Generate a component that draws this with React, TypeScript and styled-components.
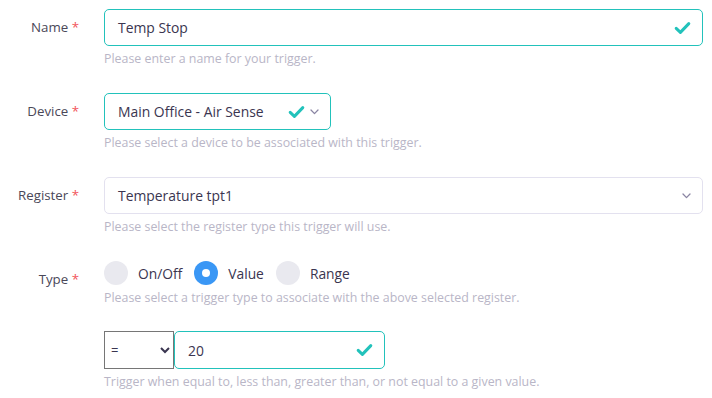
import styled, { createGlobalStyle } from 'styled-components';

const GlobalStyle = createGlobalStyle`
	html, body {
		margin: 0;
		padding: 0;
		background: #ffffff;
	}
	body {
		font-family: 'Open Sans', 'Liberation Sans', sans-serif;
	}
`;

const teal = '#22c2bb';

const CheckIcon = ({ size = 17 }: { size?: number }) => (
	<svg width={size} height={Math.round(size * 0.8)} viewBox="0 0 17 14" fill="none">
		<path d="M2.2 7.4 L6.4 11.4 L14.8 2.6" stroke={teal} strokeWidth="3" strokeLinecap="round" strokeLinejoin="round" />
	</svg>
);

const Chevron = () => (
	<svg width="9" height="6" viewBox="0 0 9 6" fill="none">
		<path d="M1 1 L4.5 4.6 L8 1" stroke="#8a85a3" strokeWidth="1.3" strokeLinecap="round" strokeLinejoin="round" />
	</svg>
);

type RadioProps = { label: string; checked?: boolean };

const Radio = ({ label, checked }: RadioProps) => (
	<RadioItem>
		<RadioDot checked={checked} />
		<RadioLabel>{label}</RadioLabel>
	</RadioItem>
);

export default function App() {
	return (
		<>
			<GlobalStyle />
			<Form>
				<Label>
					Name <Req>*</Req>
				</Label>
				<Field>
					<Control valid>
						<Value>Temp Stop</Value>
						<CheckIcon />
					</Control>
					<Help>Please enter a name for your trigger.</Help>
				</Field>

				<Label>
					Device <Req>*</Req>
				</Label>
				<Field>
					<Control valid width="227px">
						<Value>Main Office - Air Sense</Value>
						<Icons>
							<CheckIcon />
							<Chevron />
						</Icons>
					</Control>
					<Help>Please select a device to be associated with this trigger.</Help>
				</Field>

				<Label>
					Register <Req>*</Req>
				</Label>
				<Field>
					<Control>
						<Value>Temperature tpt1</Value>
						<Icons>
							<Chevron />
						</Icons>
					</Control>
					<Help>Please select the register type this trigger will use.</Help>
				</Field>

				<Label>
					Type <Req>*</Req>
				</Label>
				<Field>
					<Radios>
						<Radio label="On/Off" />
						<Radio label="Value" checked />
						<Radio label="Range" />
					</Radios>
					<Help>Please select a trigger type to associate with the above selected register.</Help>
				</Field>

				<span />
				<Field>
					<Compare>
						<Operator defaultValue="=">
							<option value="=">=</option>
							<option value="<">&lt;</option>
							<option value=">">&gt;</option>
							<option value="!=">!=</option>
						</Operator>
						<Control valid width="211px">
							<Value>20</Value>
							<CheckIcon />
						</Control>
					</Compare>
					<Help>Trigger when equal to, less than, greater than, or not equal to a given value.</Help>
				</Field>
			</Form>
		</>
	);
}

const Form = styled.div`
	display: grid;
	grid-template-columns: 79px 1fr;
	column-gap: 25px;
	row-gap: 27px;
	padding: 9px 9px 0 0;
	width: 712px;
	box-sizing: border-box;
`;

const Label = styled.div`
	text-align: right;
	font-size: 13.3px;
	line-height: 37px;
	color: #4a4858;
	white-space: nowrap;
`;

const Req = styled.span`
	color: #f2545b;
`;

const Field = styled.div`
	display: flex;
	flex-direction: column;
	align-items: flex-start;
`;

const Control = styled.div<{ valid?: boolean; width?: string }>`
	display: flex;
	align-items: center;
	justify-content: space-between;
	box-sizing: border-box;
	width: ${(p) => p.width || '100%'};
	height: 37px;
	padding: 0 11px 0 13px;
	border: 1px solid ${(p) => (p.valid ? teal : '#e3e1ef')};
	border-radius: 5px;
	background: #fff;
`;

const Value = styled.span`
	font-size: 13.9px;
	color: #3a3550;
`;

const Icons = styled.span`
	display: flex;
	align-items: center;
	gap: 5px;
`;

const Help = styled.div`
	margin-top: 6px;
	font-size: 12.4px;
	line-height: 14px;
	color: #b9b6c7;
	white-space: nowrap;
`;

const Radios = styled.div`
	display: flex;
	align-items: center;
	gap: 12px;
	height: 24px;
`;

const RadioItem = styled.label`
	display: flex;
	align-items: center;
	gap: 10px;
`;

const RadioDot = styled.span<{ checked?: boolean }>`
	display: flex;
	align-items: center;
	justify-content: center;
	box-sizing: border-box;
	width: 24px;
	height: 24px;
	border-radius: 50%;
	background: ${(p) => (p.checked ? '#3a97f5' : '#e9e9ef')};
	&::after {
		content: '';
		display: ${(p) => (p.checked ? 'block' : 'none')};
		width: 8px;
		height: 8px;
		border-radius: 50%;
		background: #fff;
	}
`;

const RadioLabel = styled.span`
	font-size: 13.8px;
	color: #3a3550;
`;

const Compare = styled.div`
	display: flex;
	align-items: stretch;
	margin-top: -1px;
`;

const Operator = styled.select`
	box-sizing: border-box;
	width: 70px;
	height: 38px;
	border: 1px solid #767676;
	border-radius: 0;
	background: #fff;
	font-family: 'Open Sans', 'Liberation Sans', sans-serif;
	font-size: 13px;
	color: #3a3550;
	padding: 0 2px;
	margin: 0;
	& + div {
		height: 38px;
	}
`;
